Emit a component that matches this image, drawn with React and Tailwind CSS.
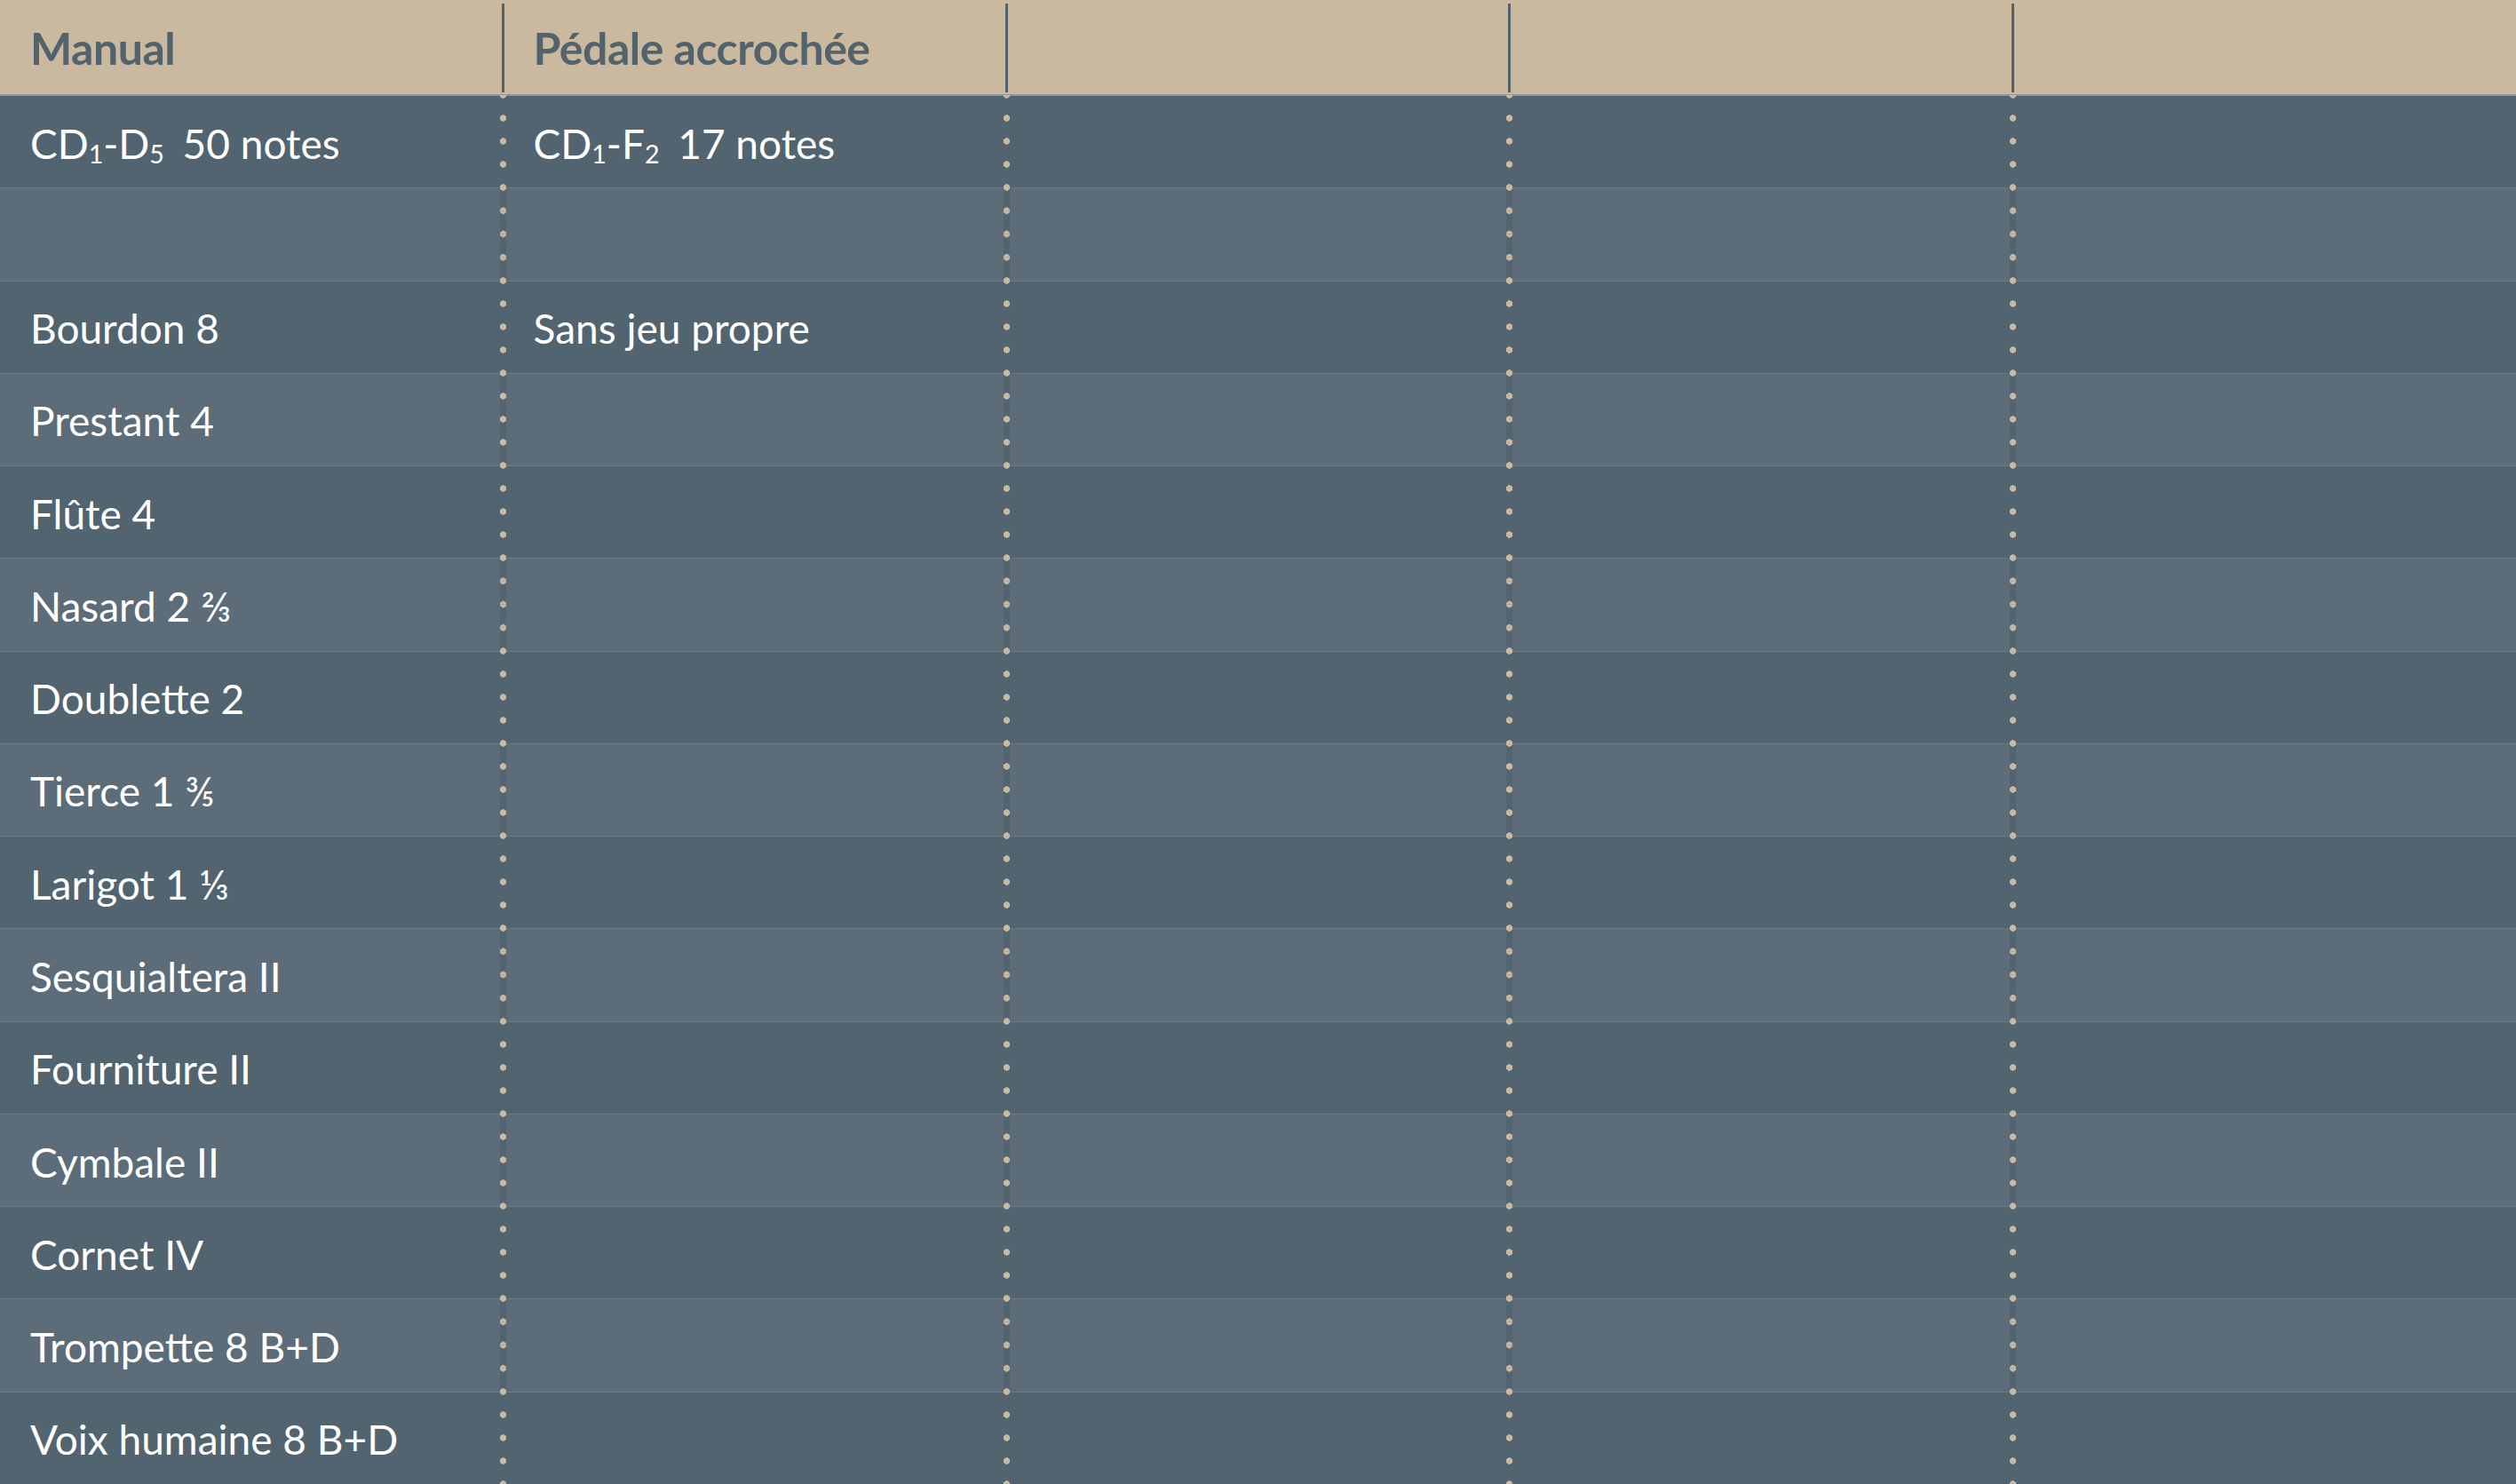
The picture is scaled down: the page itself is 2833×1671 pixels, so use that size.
import React from "react";

const Sub = ({ children }) => (
  <sub className="text-[0.62em] relative top-[0.4em] leading-none">{children}</sub>
);

const rows = [
  [
    <>
      CD<Sub>1</Sub>-D<Sub>5</Sub>
      <span className="ml-[0.45em]">50 notes</span>
    </>,
    <>
      CD<Sub>1</Sub>-F<Sub>2</Sub>
      <span className="ml-[0.45em]">17 notes</span>
    </>,
  ],
  ["", ""],
  ["Bourdon 8", "Sans jeu propre"],
  ["Prestant 4"],
  ["Flûte 4"],
  ["Nasard 2 ⅔"],
  ["Doublette 2"],
  ["Tierce 1 ⅗"],
  ["Larigot 1 ⅓"],
  ["Sesquialtera II"],
  ["Fourniture II"],
  ["Cymbale II"],
  ["Cornet IV"],
  ["Trompette 8 B+D"],
  ["Voix humaine 8 B+D"],
];

const headers = ["Manual", "Pédale accrochée", "", "", ""];

// dotted column separator, 4 dots per row
const Dots = () => (
  <div className="w-[7px] -mx-[3.5px] -mt-px shrink-0 bg-[#52646f] bg-[radial-gradient(circle_at_50%_0,#cab99f_3.4px,transparent_4px),radial-gradient(circle_at_50%_100%,#cab99f_3.4px,transparent_4px)] bg-[length:100%_25%]" />
);

export default function App() {
  return (
    <div className="w-full h-[1671px] flex flex-col bg-[#52646f] font-['Lato','Open_Sans',sans-serif] overflow-hidden">
      {/* header */}
      <div className="h-[108px] shrink-0 flex bg-[#cab99f] border-b-[2px] border-[#8f979a]">
        {headers.map((h, i) => (
          <React.Fragment key={i}>
            <div className="flex-1 basis-0 flex items-center pl-[34px] pt-[3px] text-[50px] font-bold text-[#52636e] tracking-[-0.5px]">
              {h}
            </div>
            {i < 4 && <div className="w-[3px] -mx-[1.5px] mt-[4px] mb-[2px] shrink-0 bg-[#53636e]" />}
          </React.Fragment>
        ))}
      </div>

      {/* rows */}
      {rows.map((r, idx) => (
        <div
          key={idx}
          className={`flex-1 flex ${idx > 0 ? "border-t border-[#6d7d88]" : ""} ${
            idx % 2 === 0 ? "bg-[#52646f]" : "bg-[#5c6d79]"
          }`}
        >
          {[0, 1, 2, 3, 4].map((c) => (
            <React.Fragment key={c}>
              <div className="flex-1 basis-0 flex items-center pl-[34px] pt-[4px] text-[46px] text-white leading-none">
                {r[c] || ""}
              </div>
              {c < 4 && <Dots />}
            </React.Fragment>
          ))}
        </div>
      ))}
    </div>
  );
}
